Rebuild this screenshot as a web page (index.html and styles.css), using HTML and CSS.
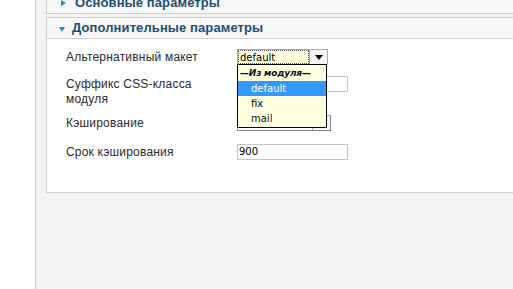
FILE: index.html
```html
<!DOCTYPE html>
<html lang="ru">
<head>
<meta charset="utf-8">
<link rel="stylesheet" href="styles.css">
</head>
<body>
<div class="page">
  <div class="side"></div>
  <div class="main">
    <div class="panel panel-first">
      <div class="panel-head"><span class="tri tri-right"></span>Основные параметры</div>
    </div>
    <div class="panel">
      <div class="panel-head"><span class="tri tri-down"></span>Дополнительные параметры</div>
      <div class="panel-body">
        <div class="form">
          <div class="label">Альтернативный макет</div>
          <div class="ctrl ctrl-select">
            <div class="select select-focus">
              <span class="select-val">default</span>
              <span class="select-btn"><span class="arrow"></span></span>
            </div>
            <div class="dropdown">
              <div class="opt opt-group">—Из модуля—</div>
              <div class="opt opt-sel">default</div>
              <div class="opt">fix</div>
              <div class="opt">mail</div>
            </div>
          </div>
          <div class="label">Суффикс CSS-класса<br>модуля</div>
          <div class="ctrl"><div class="input"></div></div>
          <div class="label">Кэширование</div>
          <div class="ctrl">
            <div class="select select-plain">
              <span class="select-val">Не кэшировать</span>
              <span class="select-btn"><span class="arrow"></span></span>
            </div>
          </div>
          <div class="label">Срок кэширования</div>
          <div class="ctrl"><div class="input">900</div></div>
        </div>
      </div>
    </div>
  </div>
</div>
</body>
</html>
```
FILE: styles.css
```css
html, body {
  margin: 0;
  padding: 0;
  height: 100%;
  overflow: hidden;
  background: #fff;
}
.page {
  display: flex;
  height: 289px;
  font-family: "Liberation Sans", Arial, sans-serif;
}
.side {
  width: 35px;
  flex: none;
  background: #fff;
  border-right: 1px solid #c9c9c9;
}
.main {
  flex: 1;
  background: #f3f3f3;
  padding-left: 10px;
  overflow: hidden;
}
.panel {
  width: 600px;
  border: 1px solid #d0d0d0;
  border-right: none;
  background: #fff;
  margin-bottom: 3px;
}
.panel-first {
  margin-top: -7px;
  border-top: none;
}
.panel-head {
  height: 20px;
  background: #f7f7f7;
  color: #1e4f72;
  font-weight: bold;
  font-size: 13px;
  letter-spacing: 0.1px;
  line-height: 20px;
  padding-left: 12px;
  display: flex;
  align-items: center;
}
.panel-head + .panel-body {
  border-top: 1px solid #d0d0d0;
}
.tri {
  display: inline-block;
  width: 0;
  height: 0;
}
.tri-right {
  border-top: 3px solid transparent;
  border-bottom: 3px solid transparent;
  border-left: 5px solid #3a88b0;
  margin-left: 2px;
  margin-right: 9px;
}
.tri-down {
  border-left: 3px solid transparent;
  border-right: 3px solid transparent;
  border-top: 5px solid #3a88b0;
  margin-top: 2px;
  margin-right: 7px;
}
.panel-body {
  height: 154px;
  padding-top: 10px;
  box-sizing: border-box;
}
.form {
  display: grid;
  grid-template-columns: 171px 120px;
  grid-template-rows: 27px 39px 29px auto;
  padding-left: 19px;
}
.label {
  font-size: 12px;
  letter-spacing: 0.2px;
  line-height: 15px;
  color: #2a2a2a;
  padding-top: 1px;
}
.ctrl {
  position: relative;
}
.select {
  display: flex;
  height: 16px;
  box-sizing: border-box;
  font-family: "DejaVu Sans", Verdana, sans-serif;
  font-size: 10px;
  color: #000;
}
.select-focus {
  width: 91px;
  background: #ffffe0;
  border: 1px solid #aaa;
}
.select-plain {
  width: 94px;
  background: #fff;
  border: 1px solid #aaa;
  border-right-color: #888;
  border-bottom-color: #888;
}
.select-val {
  flex: 1;
  line-height: 13px;
  padding-left: 1px;
  white-space: nowrap;
  overflow: hidden;
}
.select-focus .select-val {
  border: 1px dotted #555;
}
.select-btn {
  width: 17px;
  flex: none;
  background: #f4f4f4;
  border-left: 1px solid #aaa;
  display: flex;
  align-items: center;
  justify-content: center;
}
.arrow {
  width: 0;
  height: 0;
  border-left: 4px solid transparent;
  border-right: 4px solid transparent;
  border-top: 5px solid #000;
}
.dropdown {
  position: absolute;
  left: 0;
  top: 15px;
  width: 90px;
  height: 64px;
  box-sizing: border-box;
  background: #ffffe0;
  border: 1px solid #000;
  font-family: "DejaVu Sans", Verdana, sans-serif;
  font-size: 10px;
  color: #111;
  z-index: 5;
}
.opt {
  height: 15px;
  line-height: 15px;
  padding-left: 13px;
}
.opt-group {
  padding-left: 2px;
  font-weight: bold;
  font-style: italic;
  font-size: 9px;
  letter-spacing: -0.2px;
  height: 16px;
  line-height: 16px;
}
.opt-sel {
  background: #3399ff;
  color: #fff;
}
.input {
  width: 111px;
  height: 16px;
  box-sizing: border-box;
  border: 1px solid #c4c4c4;
  background: #fff;
  font-family: "DejaVu Sans", Verdana, sans-serif;
  font-size: 10px;
  line-height: 14px;
  padding-left: 1px;
  color: #000;
}
```
